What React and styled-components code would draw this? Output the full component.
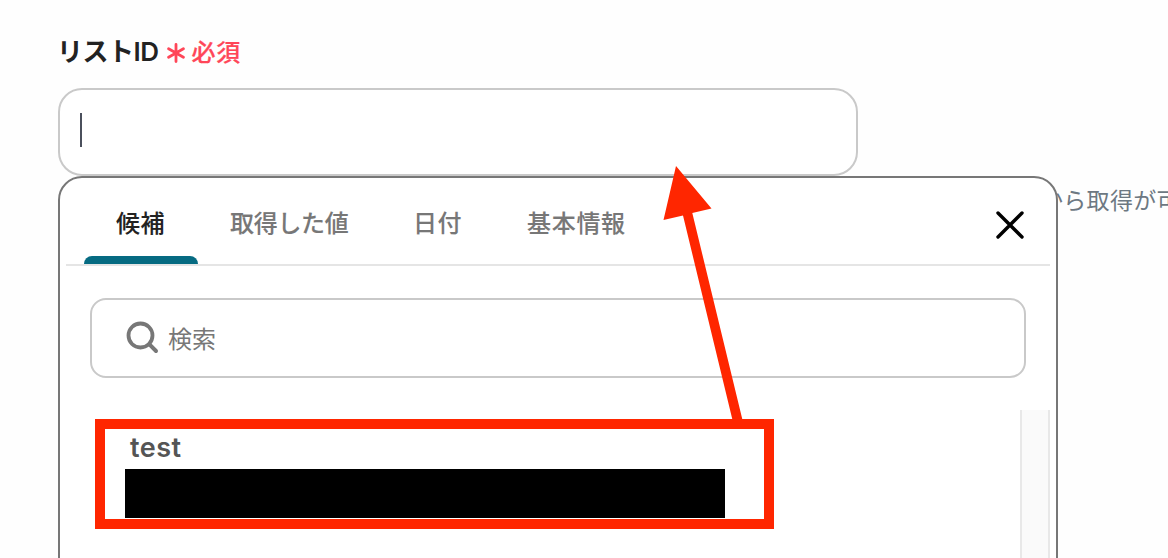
import React, { useState } from "react";
import styled, { createGlobalStyle } from "styled-components";

const GlobalStyle = createGlobalStyle`
  * {
    box-sizing: border-box;
  }
  body {
    margin: 0;
    background: #fefefe;
    font-family: Inter, "Noto Sans CJK JP", sans-serif;
    overflow: hidden;
  }
`;

const Page = styled.main`
  position: relative;
  width: 1168px;
  height: 558px;
  padding: 29px 0 0 58px;
  overflow: hidden;
`;

const Label = styled.label`
  display: flex;
  align-items: center;
  height: 40px;
  margin-left: -1px;
  font-size: 26px;
  font-weight: 600;
  color: #222;
  white-space: nowrap;
`;

const LabelText = styled.span`
  letter-spacing: -0.5px;
`;

const Required = styled.span`
  display: flex;
  align-items: center;
  gap: 6px;
  margin-left: 9px;
  padding-top: 2px;
  font-size: 24px;
  font-weight: 500;
  letter-spacing: 0.8px;
  color: #ff4658;
  -webkit-text-stroke: 0.2px currentColor;

  svg {
    margin-top: 6px;
  }
`;

const Field = styled.div`
  display: flex;
  align-items: center;
  width: 800px;
  height: 88px;
  margin-top: 19px;
  padding: 0 20px 4px;
  border: 2px solid #c9c9c9;
  border-radius: 24px;
  background: #fff;
`;

const Caret = styled.span`
  width: 2px;
  height: 34px;
  background: #4b505c;
`;

const Body = styled.div`
  display: flex;
  align-items: flex-start;
`;

const Panel = styled.section`
  flex: none;
  width: 1000px;
  height: 440px;
  border: 2px solid #777;
  border-radius: 24px;
  background: #fff;
  z-index: 1;
`;

const Hint = styled.p`
  flex: none;
  margin: 8px 0 0 -18px;
  font-size: 23px;
  line-height: 34px;
  letter-spacing: 0.3px;
  color: #6d7882;
  white-space: nowrap;
`;

const TabBar = styled.div`
  display: flex;
  align-items: stretch;
  height: 88px;
  margin: 0 6px;
  padding: 0 18px;
  border-bottom: 2px solid #e5e5e5;
`;

const Tab = styled.button`
  display: flex;
  flex-direction: column;
  justify-content: flex-end;
  width: ${(props) => props.$width}px;
  padding: 0;
  border: none;
  background: none;
  font-family: inherit;
  font-size: 24px;
  font-weight: 500;
  line-height: 36px;
  letter-spacing: ${(props) => props.$spacing}px;
  text-align: left;
  color: ${(props) => (props.$active ? "#222" : "#777")};
  -webkit-text-stroke: 0.1px currentColor;
  white-space: nowrap;

  span {
    padding-left: 32px;
  }

  &::after {
    content: "";
    width: 100%;
    height: 8px;
    margin-top: 14px;
    border-radius: 8px 8px 0 0;
    background: ${(props) => (props.$active ? "#066b82" : "transparent")};
  }
`;

const CloseButton = styled.button`
  display: flex;
  margin: 32px 7px 0 auto;
  padding: 0;
  border: none;
  background: none;
  align-self: flex-start;
`;

const SearchBox = styled.div`
  display: flex;
  align-items: center;
  gap: 8px;
  height: 80px;
  margin: 32px 30px 0;
  padding-left: 34px;
  border: 2px solid #c9c9c9;
  border-radius: 16px;
`;

const SearchInput = styled.input`
  flex: 1;
  padding: 2px 0 0;
  border: none;
  outline: none;
  background: none;
  font-family: inherit;
  font-size: 24px;
  color: #777;

  &::placeholder {
    color: #777;
    opacity: 1;
  }
`;

const Results = styled.div`
  display: flex;
  justify-content: space-between;
  height: 206px;
  margin: 32px 6px 0 35px;
`;

const ResultItem = styled.div`
  width: 679px;
  height: 110px;
  margin-top: 9px;
  padding: 0 20px;
  border: 10px solid #ff2600;
`;

const ResultName = styled.div`
  height: 40px;
  padding-left: 5px;
  font-size: 27px;
  font-weight: 600;
  line-height: 37px;
  letter-spacing: 0.5px;
  color: #555;
`;

const ResultMask = styled.div`
  width: 600px;
  height: 49px;
  background: #000;
`;

const ScrollTrack = styled.div`
  width: 30px;
  border: solid #e8e8e8;
  border-width: 0 2px;
  background: #fafafa;
`;

const Arrow = styled.svg`
  position: absolute;
  top: 160px;
  left: 655px;
  z-index: 2;
  pointer-events: none;
`;

const tabs = [
  { name: "候補", width: 114, spacing: 0.6 },
  { name: "取得した値", width: 183, spacing: -0.3 },
  { name: "日付", width: 114, spacing: 0.6 },
  { name: "基本情報", width: 164, spacing: 0.7 },
];

const App = () => {
  const [active, setActive] = useState("候補");
  const [keyword, setKeyword] = useState("");

  return (
    <>
      <GlobalStyle />
      <Page>
        <Label>
          <LabelText>リストID</LabelText>
          <Required>
            <svg width="18" height="20" viewBox="0 0 18 20" fill="none">
              <path
                d="M9 1.5v17M1.6 5.8l14.8 8.4M16.4 5.8L1.6 14.2"
                stroke="currentColor"
                strokeWidth="2.8"
                strokeLinecap="round"
              />
            </svg>
            必須
          </Required>
        </Label>
        <Field>
          <Caret />
        </Field>
        <Body>
          <Panel>
            <TabBar>
              {tabs.map((tab) => (
                <Tab
                  key={tab.name}
                  $width={tab.width}
                  $spacing={tab.spacing}
                  $active={tab.name === active}
                  onClick={() => setActive(tab.name)}
                >
                  <span>{tab.name}</span>
                </Tab>
              ))}
              <CloseButton aria-label="close">
                <svg width="30" height="30" viewBox="0 0 30 30" fill="none">
                  <path
                    d="M3 3l24 24M27 3L3 27"
                    stroke="#000"
                    strokeWidth="3.4"
                    strokeLinecap="round"
                  />
                </svg>
              </CloseButton>
            </TabBar>
            <SearchBox>
              <svg width="34" height="34" viewBox="0 0 34 34" fill="none">
                <circle cx="14.5" cy="14.5" r="12" stroke="#777" strokeWidth="3.8" />
                <path
                  d="M23.2 23.2l6.8 6.8"
                  stroke="#777"
                  strokeWidth="4"
                  strokeLinecap="round"
                />
              </svg>
              <SearchInput
                placeholder="検索"
                value={keyword}
                onChange={(e) => setKeyword(e.target.value)}
              />
            </SearchBox>
            <Results>
              <ResultItem>
                <ResultName>test</ResultName>
                <ResultMask />
              </ResultItem>
              <ScrollTrack />
            </Results>
          </Panel>
          <Hint>から取得が可</Hint>
        </Body>
        <Arrow width="95" height="262" viewBox="0 0 95 262">
          <path d="M21 6L56.5 48.5L37.3 53L87.5 260h-10L28 55.5L8.5 60z" fill="#ff2600" />
        </Arrow>
      </Page>
    </>
  );
};

export default App;
